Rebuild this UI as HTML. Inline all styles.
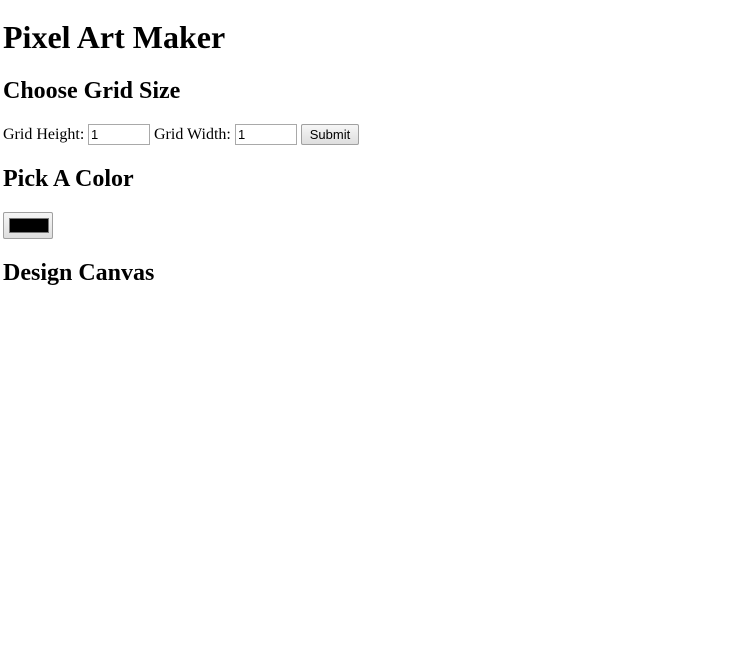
<!DOCTYPE html>
<html><head><style>
body{margin:0;background:#fff;font-family:"Liberation Serif",serif;color:#000}
.a{position:absolute;left:3px;margin:0;white-space:nowrap}
h1{font-size:32px;font-weight:bold}
h2{font-size:24px;font-weight:bold}
.in{position:absolute;height:19px;border:1px solid #a9a9a9;background:#fff;font:13px "Liberation Sans",sans-serif;line-height:19px;padding-left:2px;box-sizing:border-box}
.btn{position:absolute;border:1px solid #a0a0a0;border-radius:2px;background:linear-gradient(#f6f6f6,#dedede);box-sizing:border-box}
</style></head><body>
<h1 class="a" style="top:17px;line-height:40px">Pixel Art Maker</h1>
<h2 class="a" style="top:76px;line-height:30px">Choose Grid Size</h2>
<div class="a" style="top:125px;font-size:16px;line-height:20px">Grid Height:</div>
<div class="in" style="left:88px;top:124px;width:62px;height:21px">1</div>
<div class="a" style="left:154px;top:125px;font-size:16px;line-height:20px">Grid Width:</div>
<div class="in" style="left:235px;top:124px;width:62px;height:21px">1</div>
<div class="btn" style="left:301px;top:124px;width:58px;height:21px;font:13px 'Liberation Sans',sans-serif;line-height:19px;text-align:center">Submit</div>
<h2 class="a" style="top:164px;line-height:30px">Pick A Color</h2>
<div class="btn" style="left:3px;top:212px;width:50px;height:27px"><div style="position:absolute;left:5px;top:5px;width:40px;height:15px;background:#000;border:1px solid #777;box-sizing:border-box"></div></div>
<h2 class="a" style="top:258px;line-height:30px">Design Canvas</h2>
</body></html>
